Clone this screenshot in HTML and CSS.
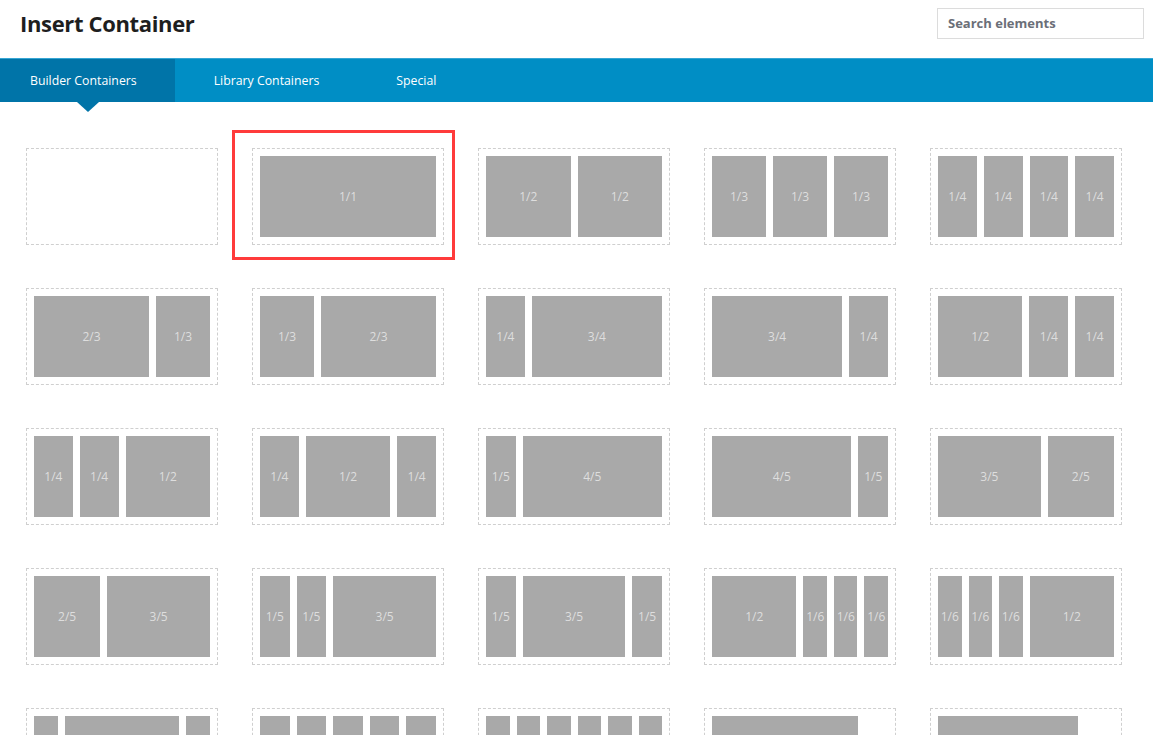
FILE: index.html
```html
<!DOCTYPE html>
<html lang="en">
<head>
<meta charset="utf-8">
<title>Insert Container</title>
<link rel="stylesheet" href="styles.css">
</head>
<body>
<div class="panel">
  <header class="panel-header">
    <h1 class="panel-title">Insert Container</h1>
    <input class="search" type="text" placeholder="Search elements">
  </header>

  <nav class="tabs">
    <a class="tab tab-active">Builder Containers</a>
    <a class="tab">Library Containers</a>
    <a class="tab">Special</a>
  </nav>

  <main class="layouts">
    <div class="layout"></div>
    <div class="layout layout-selected">
      <div class="col" style="--f:1">1/1</div>
    </div>
    <div class="layout">
      <div class="col" style="--f:.5">1/2</div>
      <div class="col" style="--f:.5">1/2</div>
    </div>
    <div class="layout">
      <div class="col" style="--f:.3333">1/3</div>
      <div class="col" style="--f:.3333">1/3</div>
      <div class="col" style="--f:.3333">1/3</div>
    </div>
    <div class="layout">
      <div class="col" style="--f:.25">1/4</div>
      <div class="col" style="--f:.25">1/4</div>
      <div class="col" style="--f:.25">1/4</div>
      <div class="col" style="--f:.25">1/4</div>
    </div>

    <div class="layout">
      <div class="col" style="--f:.6667">2/3</div>
      <div class="col" style="--f:.3333">1/3</div>
    </div>
    <div class="layout">
      <div class="col" style="--f:.3333">1/3</div>
      <div class="col" style="--f:.6667">2/3</div>
    </div>
    <div class="layout">
      <div class="col" style="--f:.25">1/4</div>
      <div class="col" style="--f:.75">3/4</div>
    </div>
    <div class="layout">
      <div class="col" style="--f:.75">3/4</div>
      <div class="col" style="--f:.25">1/4</div>
    </div>
    <div class="layout">
      <div class="col" style="--f:.5">1/2</div>
      <div class="col" style="--f:.25">1/4</div>
      <div class="col" style="--f:.25">1/4</div>
    </div>

    <div class="layout">
      <div class="col" style="--f:.25">1/4</div>
      <div class="col" style="--f:.25">1/4</div>
      <div class="col" style="--f:.5">1/2</div>
    </div>
    <div class="layout">
      <div class="col" style="--f:.25">1/4</div>
      <div class="col" style="--f:.5">1/2</div>
      <div class="col" style="--f:.25">1/4</div>
    </div>
    <div class="layout">
      <div class="col" style="--f:.2">1/5</div>
      <div class="col" style="--f:.8">4/5</div>
    </div>
    <div class="layout">
      <div class="col" style="--f:.8">4/5</div>
      <div class="col" style="--f:.2">1/5</div>
    </div>
    <div class="layout">
      <div class="col" style="--f:.6">3/5</div>
      <div class="col" style="--f:.4">2/5</div>
    </div>

    <div class="layout">
      <div class="col" style="--f:.4">2/5</div>
      <div class="col" style="--f:.6">3/5</div>
    </div>
    <div class="layout">
      <div class="col" style="--f:.2">1/5</div>
      <div class="col" style="--f:.2">1/5</div>
      <div class="col" style="--f:.6">3/5</div>
    </div>
    <div class="layout">
      <div class="col" style="--f:.2">1/5</div>
      <div class="col" style="--f:.6">3/5</div>
      <div class="col" style="--f:.2">1/5</div>
    </div>
    <div class="layout">
      <div class="col" style="--f:.5">1/2</div>
      <div class="col" style="--f:.1667">1/6</div>
      <div class="col" style="--f:.1667">1/6</div>
      <div class="col" style="--f:.1667">1/6</div>
    </div>
    <div class="layout">
      <div class="col" style="--f:.1667">1/6</div>
      <div class="col" style="--f:.1667">1/6</div>
      <div class="col" style="--f:.1667">1/6</div>
      <div class="col" style="--f:.5">1/2</div>
    </div>

    <div class="layout">
      <div class="col" style="--f:.1667">1/6</div>
      <div class="col" style="--f:.6667">2/3</div>
      <div class="col" style="--f:.1667">1/6</div>
    </div>
    <div class="layout">
      <div class="col" style="--f:.2">1/5</div>
      <div class="col" style="--f:.2">1/5</div>
      <div class="col" style="--f:.2">1/5</div>
      <div class="col" style="--f:.2">1/5</div>
      <div class="col" style="--f:.2">1/5</div>
    </div>
    <div class="layout">
      <div class="col" style="--f:.1667">1/6</div>
      <div class="col" style="--f:.1667">1/6</div>
      <div class="col" style="--f:.1667">1/6</div>
      <div class="col" style="--f:.1667">1/6</div>
      <div class="col" style="--f:.1667">1/6</div>
      <div class="col" style="--f:.1667">1/6</div>
    </div>
    <div class="layout">
      <div class="col" style="--f:.8333">5/6</div>
    </div>
    <div class="layout">
      <div class="col" style="--f:.8">4/5</div>
    </div>
  </main>
</div>
</body>
</html>
```

FILE: styles.css
```css
*,
*::before,
*::after {
  box-sizing: border-box;
}

html,
body {
  margin: 0;
  height: 100%;
  overflow: hidden;
  background: #fff;
}

body {
  font-family: "Open Sans", "Liberation Sans", sans-serif;
  color: #23282d;
}

.panel {
  display: flex;
  flex-direction: column;
  height: 100%;
}

/* Title row with the search field */
.panel-header {
  flex-shrink: 0;
  display: flex;
  align-items: center;
  justify-content: space-between;
  height: 58px;
  padding: 0 9px 12px 20px;
}

.panel-title {
  margin: 0;
  font-size: 22px;
  font-weight: 700;
  letter-spacing: -0.35px;
  color: #1e1e1e;
}

.search {
  width: 207px;
  height: 31px;
  border: 1px solid #dcdcdc;
  padding: 0 10px;
  font-family: inherit;
  font-size: 13px;
  font-weight: 700;
  outline: none;
}

.search::placeholder {
  color: #6b6f78;
}

/* Blue tab strip */
.tabs {
  flex-shrink: 0;
  display: flex;
  height: 44px;
  background: #008ec5;
  border-top: 1px solid #36a6d4;
}

.tab {
  position: relative;
  display: flex;
  align-items: center;
  padding: 0 38.5px;
  font-size: 12.3px;
  color: #fff;
  cursor: pointer;
}

.tab:first-child {
  padding-left: 30px;
}

.tab-active {
  background: #0074a8;
}

.tab-active::after {
  content: "";
  position: absolute;
  left: 50%;
  top: 100%;
  margin-left: -11px;
  border-left: 11px solid transparent;
  border-right: 11px solid transparent;
  border-top: 10px solid #0074a8;
}

/* Grid of column layouts */
.layouts {
  flex-shrink: 0;
  display: grid;
  grid-template-columns: repeat(5, 192px);
  column-gap: 34px;
  row-gap: 43px;
  padding: 46px 0 0 26px;
}

.layout {
  position: relative;
  display: flex;
  height: 97px;
  padding: 7px 0 7px 7px;
  border: 1px dashed #cfcfcf;
}

.layout-selected::after {
  content: "";
  position: absolute;
  left: -21px;
  top: -19px;
  width: 223px;
  height: 130px;
  border: 3px solid #ff3b3b;
  pointer-events: none;
}

.col {
  display: flex;
  align-items: center;
  justify-content: center;
  width: calc(var(--f) * 184px - 7px);
  margin-right: 7px;
  background: #a9a9a9;
  color: #dedede;
  font-size: 12px;
}
```
